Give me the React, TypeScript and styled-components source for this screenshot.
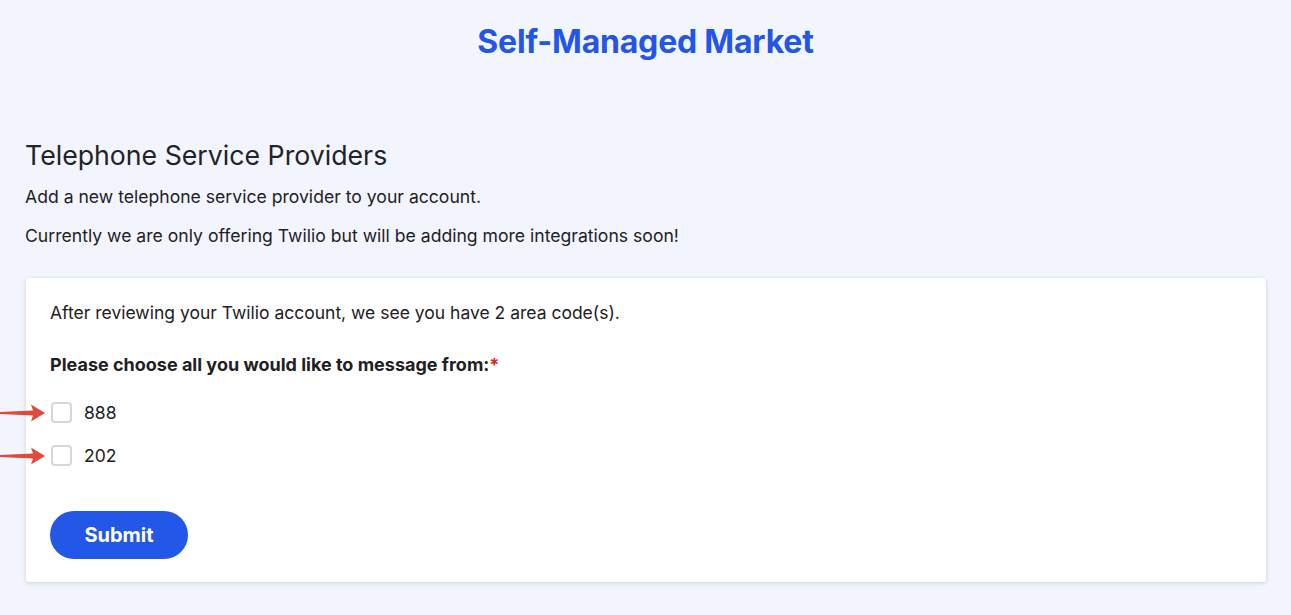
import React from "react";
import styled, { createGlobalStyle } from "styled-components";

const GlobalStyle = createGlobalStyle`
  html, body {
    margin: 0;
    padding: 0;
    background: #f2f5fe;
    font-family: Inter, "Noto Sans", sans-serif;
    color: #1f2024;
  }
`;

const codes = ["888", "202"];

const Arrow = () => (
  <ArrowMark width="46" height="20" viewBox="0 0 46 20">
    <path d="M0 9 L33 7.6 L31 1.5 L45 10 L31 18.5 L33 12.4 L0 11 Z" fill="#e2483b" />
  </ArrowMark>
);

const App = () => {
  return (
    <>
      <GlobalStyle />
      <Page>
        <Title>Self-Managed Market</Title>
        <Heading>Telephone Service Providers</Heading>
        <Text>Add a new telephone service provider to your account.</Text>
        <Text>
          Currently we are only offering Twilio but will be adding more
          integrations soon!
        </Text>
        <Card>
          <Info>
            After reviewing your Twilio account, we see you have 2 area code(s).
          </Info>
          <Label>
            Please choose all you would like to message from:<Req>*</Req>
          </Label>
          <Options>
            {codes.map((c) => (
              <Option key={c}>
                <Arrow />
                <Box type="checkbox" />
                <span>{c}</span>
              </Option>
            ))}
          </Options>
          <Button>Submit</Button>
        </Card>
      </Page>
    </>
  );
};

export default App;

const Page = styled.div`
  padding: 0 25px 32px;
  position: relative;
`;

const Title = styled.h1`
  margin: 0;
  padding-top: 22px;
  text-align: center;
  font-size: 32px;
  font-weight: 700;
  line-height: 40px;
  color: #2356e8;
  letter-spacing: -0.2px;
`;

const Heading = styled.h2`
  margin: 77px 0 0;
  font-size: 26.7px;
  font-weight: 400;
  line-height: 32px;
  color: #222327;
`;

const Text = styled.p`
  margin: 0;
  margin-top: 10px;
  font-size: 17.6px;
  line-height: 32px;
  & + & {
    margin-top: 7px;
  }
`;

const Card = styled.div`
  margin-top: 26px;
  margin-left: 1px;
  background: #ffffff;
  border-radius: 3px;
  box-shadow: 0 1px 4px rgba(0, 0, 0, 0.16);
  padding: 21px 24px 23px;
`;

const Info = styled.div`
  font-size: 17.5px;
  line-height: 28px;
`;

const Label = styled.div`
  margin-top: 24px;
  font-size: 18px;
  font-weight: 700;
  line-height: 28px;
`;

const Req = styled.span`
  color: #e0261d;
`;

const Options = styled.div`
  margin-top: 22px;
  display: flex;
  flex-direction: column;
  gap: 20px;
`;

const Option = styled.label`
  position: relative;
  display: flex;
  align-items: center;
  gap: 12px;
  font-size: 17.5px;
  line-height: 23px;
`;

const ArrowMark = styled.svg`
  position: absolute;
  left: -50px;
  top: 2px;
`;

const Box = styled.input`
  appearance: none;
  margin: 0 0 0 1px;
  width: 21px;
  height: 21px;
  border: 2px solid #d7d7d7;
  border-radius: 4px;
  background: #fff;
`;

const Button = styled.button`
  margin-top: 44px;
  height: 48px;
  width: 138px;
  border: none;
  border-radius: 24px;
  background: #2357e8;
  color: #fff;
  font-family: Inter, "Noto Sans", sans-serif;
  font-size: 20px;
  font-weight: 700;
  cursor: pointer;
`;
